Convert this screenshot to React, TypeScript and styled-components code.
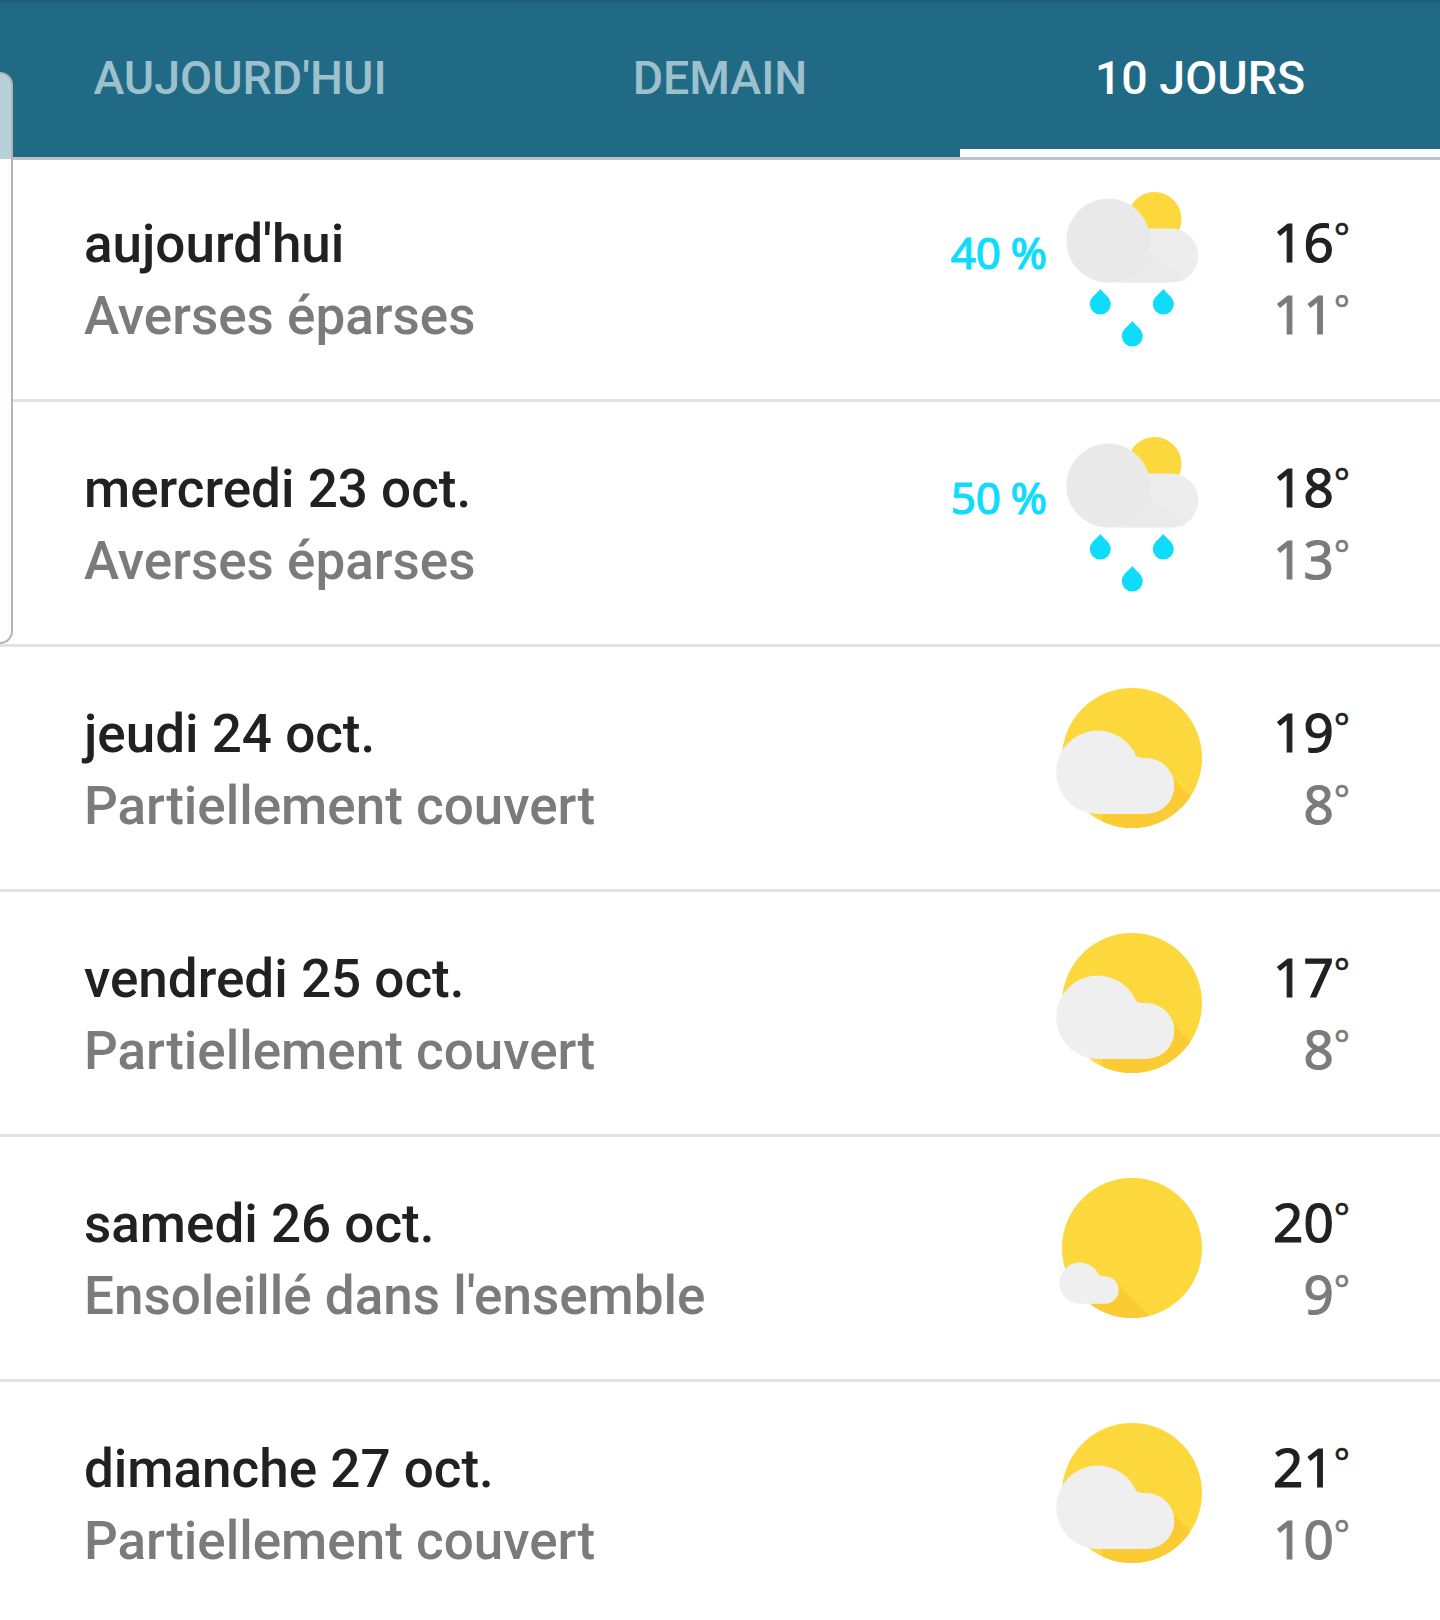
import React from "react"
import styled, { createGlobalStyle } from "styled-components"

type Sky = "rain" | "cloudy" | "sunny"

type Day = {
  label: string,
  summary: string,
  high: number,
  low: number,
  sky: Sky,
  chance?: number,
}

const days: Day[] = [
  { label: "aujourd'hui", summary: "Averses éparses", high: 16, low: 11, sky: "rain", chance: 40 },
  { label: "mercredi 23 oct.", summary: "Averses éparses", high: 18, low: 13, sky: "rain", chance: 50 },
  { label: "jeudi 24 oct.", summary: "Partiellement couvert", high: 19, low: 8, sky: "cloudy" },
  { label: "vendredi 25 oct.", summary: "Partiellement couvert", high: 17, low: 8, sky: "cloudy" },
  { label: "samedi 26 oct.", summary: "Ensoleillé dans l'ensemble", high: 20, low: 9, sky: "sunny" },
  { label: "dimanche 27 oct.", summary: "Partiellement couvert", high: 21, low: 10, sky: "cloudy" },
]

const tabs = ["AUJOURD'HUI", "DEMAIN", "10 JOURS"]
const selectedTab = 2

const SUN = "#fdd83c"
const SUN_SHADE = "#fbcb33"
const CLOUD = "#efefef"
const RAIN = "#0fdcfb"

function Drop({ x, y }: { x: number, y: number }) {
  return (
    <path
      d={`M${x} ${y}c2 3.5 10.5 8 10.5 15a10.5 10.5 0 0 1-21 0c0-7 8.500-11.500 10.500-15z`}
      fill={RAIN}
    />
  )
}

function RainIcon() {
  return (
    <IconSvg viewBox="0 0 160 160">
      <circle cx="102.500" cy="31" r="27" fill={SUN} />
      <path d="M56 94.600h63.300a27 27 0 0 0 0-54H56z" fill="#ededed" />
      <path d="M92 60l44 33-17 1.600H70z" fill="#e7e7e7" opacity="0.4" />
      <circle cx="56.300" cy="52.600" r="42" fill="#e9e9e9" />
      <Drop x={48.300} y={101} />
      <Drop x={111.300} y={101} />
      <Drop x={80.300} y={133} />
    </IconSvg>
  )
}

// the sun's long shadow stays inside the disc
function SunDisc({ shade }: { shade: string }) {
  const clipId = React.useId()
  return (
    <>
      <clipPath id={clipId}>
        <circle cx="80" cy="80" r="70" />
      </clipPath>
      <circle cx="80" cy="80" r="70" fill={SUN} />
      <path d={shade} fill={SUN_SHADE} clipPath={`url(#${clipId})`} />
    </>
  )
}

function CloudyIcon() {
  return (
    <IconSvg viewBox="0 0 160 160">
      <SunDisc shade="M120 100L155 135V155H50V130z" />
      <path
        d="M46 136A41.700 41.700 0 1 1 84.500 78.500Q88 80 94.300 80a28 28 0 0 1 0 56z"
        fill={CLOUD}
      />
    </IconSvg>
  )
}

function SunnyIcon() {
  return (
    <IconSvg viewBox="0 0 160 160">
      <SunDisc shade="M60 110L100 150V155H40V130z" />
      <path
        d="M28.500 135.700A20.600 20.600 0 1 1 46.500 106.500Q49 108.300 53 108.300a13.700 13.700 0 0 1 0 27.400z"
        fill={CLOUD}
      />
    </IconSvg>
  )
}

const skyIcons: Record<Sky, () => React.JSX.Element> = {
  rain: RainIcon,
  cloudy: CloudyIcon,
  sunny: SunnyIcon,
}

export default function App(): React.JSX.Element {
  return (
    <Page>
      <GlobalStyle />
      <TabBar>
        {tabs.map((tab, index) => (
          <Tab key={tab} $selected={index === selectedTab}>{tab}</Tab>
        ))}
      </TabBar>
      <EdgeHandle />
      <main>
        {days.map(day => {
          const Icon = skyIcons[day.sky]
          return (
            <Row key={day.label}>
              <DayText>
                <DayLabel>{day.label}</DayLabel>
                <Summary>{day.summary}</Summary>
              </DayText>
              {day.chance !== undefined && <Chance>{day.chance} %</Chance>}
              <Icon />
              <Temps>
                <High>{day.high}<Degree>°</Degree></High>
                <Low>{day.low}<Degree>°</Degree></Low>
              </Temps>
            </Row>
          )
        })}
      </main>
    </Page>
  )
}

const GlobalStyle = createGlobalStyle`
  html, body {
    margin: 0;
    background: #ffffff;
  }
  body {
    font-family: Roboto, "Liberation Sans", sans-serif;
  }
`

const Page = styled.div`
  position: relative;
  width: 1440px;
  height: 1620px;
  overflow: hidden;
  background: #ffffff;
`

const TabBar = styled.nav`
  position: relative;
  display: grid;
  grid-template-columns: repeat(3, 480px);
  height: 157px;
  background: linear-gradient(#1d5f78 0, #216a85 6px);
  box-shadow: 0 3px 0 #bcc3c6;
`

const Tab = styled.div<{ $selected: boolean }>`
  display: flex;
  align-items: center;
  justify-content: center;
  box-sizing: border-box;
  padding-top: 7px;
  font-size: 46.500px;
  font-weight: 500;
  color: ${p => (p.$selected ? "#ffffff" : "#9dc0cd")};
  border-bottom: 8px solid ${p => (p.$selected ? "#fbfefd" : "transparent")};
`

/* sliver of the side panel peeking in over the left edge */
const EdgeHandle = styled.div`
  position: absolute;
  left: 0;
  top: 72px;
  width: 11px;
  height: 568px;
  border: 2px solid #b4b4b4;
  border-left: none;
  border-radius: 0 14px 14px 0;
  background: linear-gradient(#b8d0d8 0, #b8d0d8 85px, #fdfdfd 85px);
`

const Row = styled.section`
  display: flex;
  box-sizing: border-box;
  height: 245px;
  padding: 0 90px 0 84px;
  border-bottom: 3px solid #e2e2e2;
  &:last-child {
    border-bottom-color: transparent;
  }
`

const DayText = styled.div`
  flex: 1;
  align-self: center;
  padding-top: 4px;
`

const DayLabel = styled.div`
  font-size: 53px;
  line-height: 72px;
  font-weight: 500;
  color: #212121;
`

const Summary = styled.div`
  font-size: 53px;
  line-height: 72px;
  font-weight: 500;
  color: #7b7b7b;
`

/* Noto Sans only ships regular and bold here, the stroke gives it a medium weight */
const Chance = styled.div`
  align-self: flex-start;
  margin: 67px 5px 0 0;
  font-family: "Noto Sans", sans-serif;
  font-size: 44px;
  line-height: 56px;
  font-weight: 400;
  -webkit-text-stroke: 1.200px ${RAIN};
  word-spacing: -2px;
  color: ${RAIN};
`

const IconSvg = styled.svg`
  flex: none;
  align-self: flex-start;
  margin-top: 31px;
  width: 160px;
  height: 160px;
`

const Temps = styled.div`
  flex: none;
  align-self: center;
  width: 138px;
  text-align: right;
  font-family: "Noto Sans", sans-serif;
  font-weight: 400;
`

const High = styled.div`
  font-size: 53px;
  line-height: 72px;
  color: #212121;
  -webkit-text-stroke: 1.200px #212121;
`

const Low = styled.div`
  font-size: 53px;
  line-height: 72px;
  color: #7b7b7b;
  -webkit-text-stroke: 1.200px #7b7b7b;
`

const Degree = styled.span`
  font-size: 38px;
  line-height: 0;
  vertical-align: 11px;
  -webkit-text-stroke: 0.400px currentColor;
`
